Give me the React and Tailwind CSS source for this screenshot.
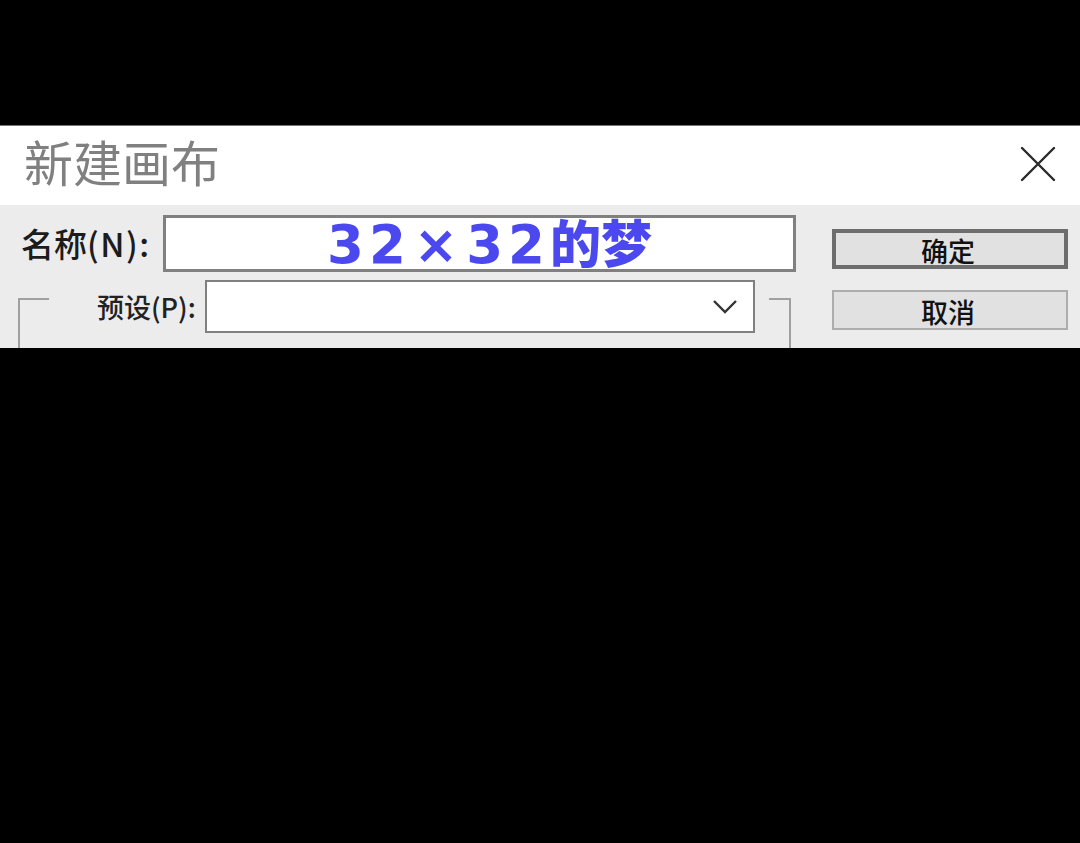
import React from 'react';

const cjk = '"Noto Sans CJK SC", "Liberation Sans", sans-serif';

const App = () => {
  return (
    <div className="w-[1080px] h-[843px] bg-black overflow-hidden flex flex-col" style={{ fontFamily: cjk }}>
      <div className="h-[125px] shrink-0" />

      {/* Dialog, cut off by the black band below */}
      <div className="h-[223px] shrink-0 overflow-hidden bg-[#ececec] border-t border-t-[#777777]">
        {/* Title bar */}
        <div className="h-[79px] bg-white flex items-center justify-between pl-[24px] pr-[23px]">
          <h1 className="text-[49px] leading-none font-normal text-[#808080] -mt-[10px]">新建画布</h1>
          <svg width="38" height="38" viewBox="0 0 38 38" className="-mt-[4px]">
            <path d="M3 3 L35 35 M35 3 L3 35" stroke="#2a2a2a" strokeWidth="2.4" strokeLinecap="round" />
          </svg>
        </div>

        <div className="flex">
          {/* Fields */}
          <div className="w-[832px] shrink-0 flex flex-col">
            <div className="flex items-center pl-[21px] pt-[10px]">
              <span className="w-[142px] shrink-0 text-[33px] leading-none font-medium text-[#1c1c1c] whitespace-nowrap -mt-[1px]">
                名称<span className="tracking-[1.5px]">(N):</span>
              </span>
              <div className="w-[633px] h-[57px] bg-white border-[3px] border-[#808080] flex items-center justify-center pl-[20px]">
                <span className="text-[51px] leading-none font-black text-[#4a48ee] whitespace-nowrap">
                  <span className="text-[53px] font-bold tracking-[5px]" style={{ fontFamily: '"DejaVu Sans", sans-serif' }}>32<span className="mx-[3px]">×</span>32</span>
                  的梦
                </span>
              </div>
            </div>

            <div className="flex items-start pl-[18px] pt-[8px]">
              <div className="w-[31px] h-[60px] shrink-0 mt-[18px] border-l-2 border-t-2 border-[#a0a0a0]" />
              <span className="w-[157px] shrink-0 pl-[48px] mt-[10px] text-[27px] leading-[34px] font-medium text-[#222222] whitespace-nowrap">预设(P):</span>
              <div className="w-[550px] h-[53px] -ml-[1px] shrink-0 bg-white border-2 border-[#808080] flex items-center justify-end pr-[15px]">
                <svg width="26" height="16" viewBox="0 0 26 16">
                  <path d="M2 2 L13 13 L24 2" fill="none" stroke="#333333" strokeWidth="2.4" />
                </svg>
              </div>
              <div className="w-[22px] h-[60px] shrink-0 ml-[14px] mt-[18px] border-r-2 border-t-2 border-[#a0a0a0]" />
            </div>
          </div>

          {/* Buttons */}
          <div className="w-[236px] shrink-0 flex flex-col gap-[21px] pt-[24px]">
            <button className="h-[40px] bg-[#e1e1e1] border-[4px] border-[#6d6d6d] text-[27px] leading-none font-medium text-[#111111] flex items-center justify-center pt-[3px] pr-[4px]">确定</button>
            <button className="h-[40px] bg-[#e1e1e1] border-2 border-[#adadad] text-[27px] leading-none font-medium text-[#111111] flex items-center justify-center pt-[3px] pr-[4px]">取消</button>
          </div>
        </div>
      </div>
    </div>
  );
};

export default App;
